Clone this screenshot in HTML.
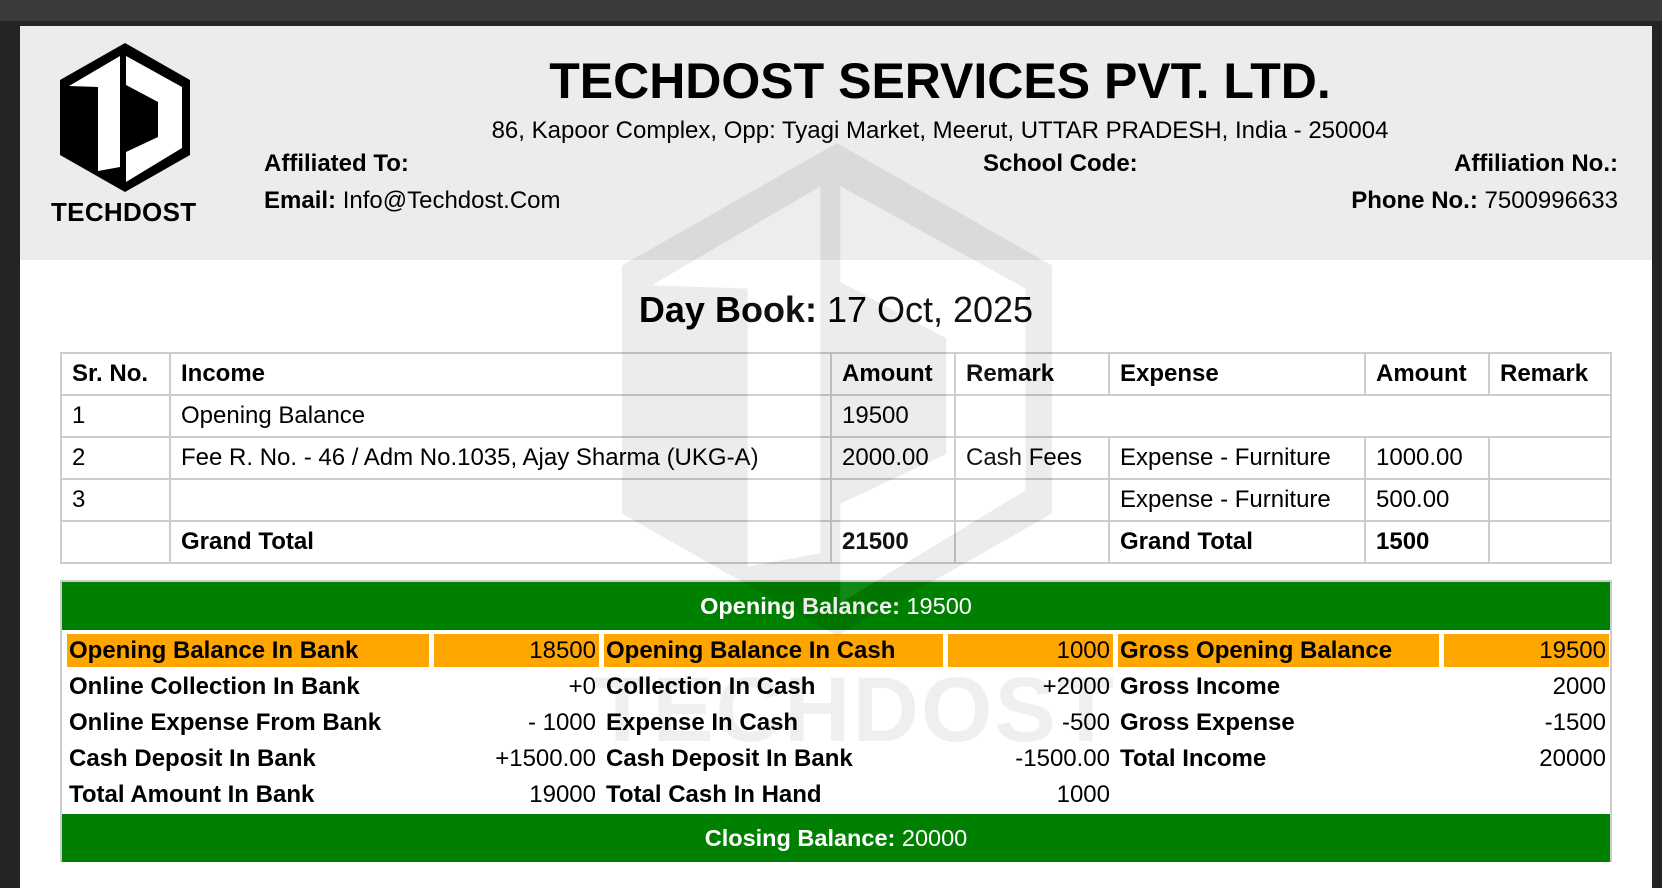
<!DOCTYPE html>
<html><head><meta charset="utf-8">
<style>
*{margin:0;padding:0;box-sizing:border-box}
body{width:1662px;height:888px;overflow:hidden;background:#242424;font-family:"Liberation Sans",Arial,sans-serif;color:#000;position:relative}
#top{position:absolute;left:0;top:0;width:1662px;height:21px;background:#3a3a3a}
#page{position:absolute;left:20px;top:26px;width:1632px;height:862px;background:#fff}
#hdr{position:absolute;left:20px;top:26px;width:1632px;height:234px;background:#edebec}
.a{position:absolute;white-space:nowrap}
table.t{position:absolute;left:60px;top:352px;width:1552px;border-collapse:collapse;font-size:24px}
table.t td{border:2px solid #ccc;height:42px;padding:0 10px;vertical-align:middle}
.sum{position:absolute;left:60px;top:580px;width:1552px;height:282px;border:2px solid #ccc}
.g{position:absolute;left:62px;width:1548px;height:48px;background:#008000;color:#fff;font-size:23.5px;text-align:center;line-height:48px}
.grid{position:absolute;left:67px;top:634px;display:grid;grid-template-columns:362px 165px 339px 165px 321px 165px;column-gap:5px;row-gap:3px;font-size:24px}
.grid div{height:33px;line-height:33px;padding:0 0 0 2px;font-weight:bold;white-space:nowrap}
.grid div.v{text-align:right;font-weight:normal;padding:0 3px 0 0}
.grid .o{background:#ffa500}
</style></head><body>
<div id="top"></div>
<div id="page"></div>
<div id="hdr"></div>

<svg class="a" style="left:60px;top:43px" width="130" height="150" viewBox="0 0 130 150">
<polygon points="65,0 130,37 130,112 65,149 0,112 0,37" fill="#000"/>
<polygon points="9,43 60,13 60,124 38,128 38,44" fill="#fff"/>
<polygon points="66,13 122,44 122,105 66,139 66,109 98,94 98,59 66,42" fill="#fff"/>
</svg>
<div class="a" style="left:51px;top:197px;font-size:26px;font-weight:bold;letter-spacing:0.3px">TECHDOST</div>

<div class="a" style="left:440px;width:1000px;top:52px;text-align:center;font-size:50px;font-weight:bold">TECHDOST SERVICES PVT. LTD.</div>
<div class="a" style="left:440px;width:1000px;top:117px;text-align:center;font-size:24px">86, Kapoor Complex, Opp: Tyagi Market, Meerut, UTTAR PRADESH, India - 250004</div>
<div class="a" style="left:264px;top:150px;font-size:24px;font-weight:bold">Affiliated To:</div>
<div class="a" style="left:983px;top:150px;font-size:24px;font-weight:bold">School Code:</div>
<div class="a" style="right:44px;top:150px;font-size:24px;font-weight:bold">Affiliation No.:</div>
<div class="a" style="left:264px;top:187px;font-size:24px"><b>Email:</b> Info@Techdost.Com</div>
<div class="a" style="right:44px;top:187px;font-size:24px"><b>Phone No.:</b> 7500996633</div>

<div class="a" style="left:436px;width:800px;top:289px;text-align:center;font-size:36px"><b>Day Book:</b> 17 Oct, 2025</div>

<table class="t">
<colgroup><col style="width:109px"><col style="width:661px"><col style="width:124px"><col style="width:154px"><col style="width:256px"><col style="width:124px"><col style="width:122px"></colgroup>
<tr style="font-weight:bold"><td>Sr. No.</td><td>Income</td><td>Amount</td><td>Remark</td><td>Expense</td><td>Amount</td><td>Remark</td></tr>
<tr><td>1</td><td>Opening Balance</td><td>19500</td><td colspan="4"></td></tr>
<tr><td>2</td><td>Fee R. No. - 46 / Adm No.1035, Ajay Sharma (UKG-A)</td><td>2000.00</td><td>Cash Fees</td><td>Expense - Furniture</td><td>1000.00</td><td></td></tr>
<tr><td>3</td><td></td><td></td><td></td><td>Expense - Furniture</td><td>500.00</td><td></td></tr>
<tr style="font-weight:bold"><td></td><td>Grand Total</td><td>21500</td><td></td><td>Grand Total</td><td>1500</td><td></td></tr>
</table>

<div class="sum"></div>
<div class="g" style="top:582px"><b>Opening Balance:</b> 19500</div>
<div class="grid">
<div class="o">Opening Balance In Bank</div><div class="v o">18500</div><div class="o">Opening Balance In Cash</div><div class="v o">1000</div><div class="o">Gross Opening Balance</div><div class="v o">19500</div>
<div>Online Collection In Bank</div><div class="v">+0</div><div>Collection In Cash</div><div class="v">+2000</div><div>Gross Income</div><div class="v">2000</div>
<div>Online Expense From Bank</div><div class="v">- 1000</div><div>Expense In Cash</div><div class="v">-500</div><div>Gross Expense</div><div class="v">-1500</div>
<div>Cash Deposit In Bank</div><div class="v">+1500.00</div><div>Cash Deposit In Bank</div><div class="v">-1500.00</div><div>Total Income</div><div class="v">20000</div>
<div>Total Amount In Bank</div><div class="v">19000</div><div>Total Cash In Hand</div><div class="v">1000</div><div></div><div class="v"></div>
</div>
<div class="g" style="top:814px"><b>Closing Balance:</b> 20000</div>

<svg class="a" style="left:622px;top:143px;opacity:0.07;pointer-events:none" width="430" height="493" viewBox="0 0 130 149">
<polygon points="65,0 130,37 130,112 65,149 0,112 0,37" fill="#000"/>
<polygon points="9,43 60,13 60,124 38,128 38,44" fill="#fff"/>
<polygon points="66,13 122,44 122,105 66,139 66,109 98,94 98,59 66,42" fill="#fff"/>
</svg>
<div class="a" style="left:594px;top:658px;font-size:92px;font-weight:bold;color:#000;opacity:0.06;letter-spacing:2px">TECHDOST</div>
</body></html>
